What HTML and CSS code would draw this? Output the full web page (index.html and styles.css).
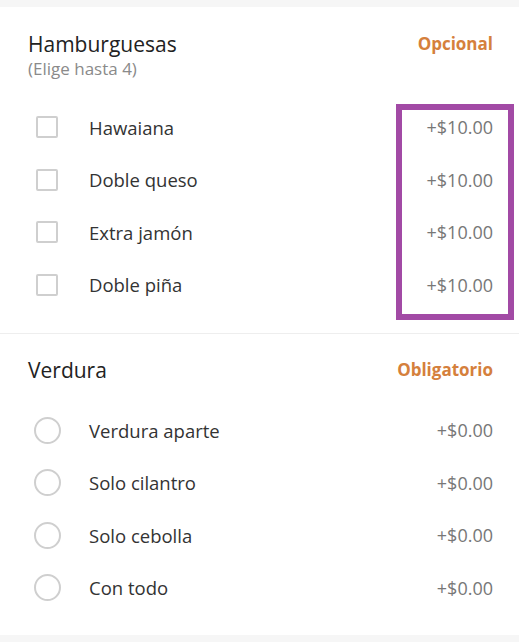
FILE: index.html
```html
<!DOCTYPE html>
<html lang="es">
<head>
    <meta charset="UTF-8">
    <meta name="viewport" content="width=device-width, initial-scale=1.0">
    <title>Opciones</title>
    <link rel="stylesheet" href="styles.css">
</head>
<body>

    <div class="band"></div>

    <div class="group">
        <div class="group-head">
            <div>
                <div class="group-title">Hamburguesas</div>
                <div class="group-sub">(Elige hasta 4)</div>
            </div>
            <div class="group-tag">Opcional</div>
        </div>
        <div class="option"><span class="check"></span><span class="option-name">Hawaiana</span><span class="option-price">+$10.00</span></div>
        <div class="option"><span class="check"></span><span class="option-name">Doble queso</span><span class="option-price">+$10.00</span></div>
        <div class="option"><span class="check"></span><span class="option-name">Extra jamón</span><span class="option-price">+$10.00</span></div>
        <div class="option"><span class="check"></span><span class="option-name">Doble piña</span><span class="option-price">+$10.00</span></div>
    </div>

    <div class="group group-second">
        <div class="group-head">
            <div class="group-title">Verdura</div>
            <div class="group-tag">Obligatorio</div>
        </div>
        <div class="option"><span class="radio"></span><span class="option-name">Verdura aparte</span><span class="option-price">+$0.00</span></div>
        <div class="option"><span class="radio"></span><span class="option-name">Solo cilantro</span><span class="option-price">+$0.00</span></div>
        <div class="option"><span class="radio"></span><span class="option-name">Solo cebolla</span><span class="option-price">+$0.00</span></div>
        <div class="option"><span class="radio"></span><span class="option-name">Con todo</span><span class="option-price">+$0.00</span></div>
    </div>

    <div class="band"></div>

    <!-- highlight over the price column -->
    <div class="highlight"></div>

</body>
</html>
```

FILE: styles.css
```css
body {
  margin: 0;
  font-family: "Open Sans", "Liberation Sans", sans-serif;
  background: #fff;
  position: relative;
}

.band {
  height: 7px;
  background-color: #f6f6f6;
}

.group {
  padding: 23px 26px 22px 28px;
  border-bottom: 1px solid #eeeeee;
}

.group-second {
  padding-top: 22px;
  padding-bottom: 21px;
  border-bottom: none;
}

.group-head {
  display: flex;
  justify-content: space-between;
  align-items: flex-start;
  margin-bottom: 21px;
}

.group-second .group-head {
  margin-bottom: 20px;
}

.group-title {
  font-size: 21px;
  line-height: 28px;
  font-weight: 500;
  color: #222;
}

.group-sub {
  font-size: 17px;
  line-height: 22px;
  color: #8a8a8a;
}

.group-tag {
  font-size: 17px;
  line-height: 28px;
  font-weight: 700;
  color: #d5803c;
}

.option {
  display: flex;
  align-items: center;
  height: 52.5px;
}

.check {
  width: 18px;
  height: 18px;
  border: 2px solid #cfcfcf;
  border-radius: 2px;
  margin-left: 8px;
  margin-right: 31px;
}

.radio {
  width: 23px;
  height: 23px;
  border: 2px solid #cfcfcf;
  border-radius: 50%;
  margin-left: 6px;
  margin-right: 28px;
}

.option-name {
  flex: 1;
  font-size: 18.5px;
  color: #333;
}

.option-price {
  font-size: 18px;
  color: #777;
}

.highlight {
  position: absolute;
  left: 396px;
  top: 104px;
  width: 118px;
  height: 216px;
  box-sizing: border-box;
  border: 6px solid #a24aa5;
}
```
